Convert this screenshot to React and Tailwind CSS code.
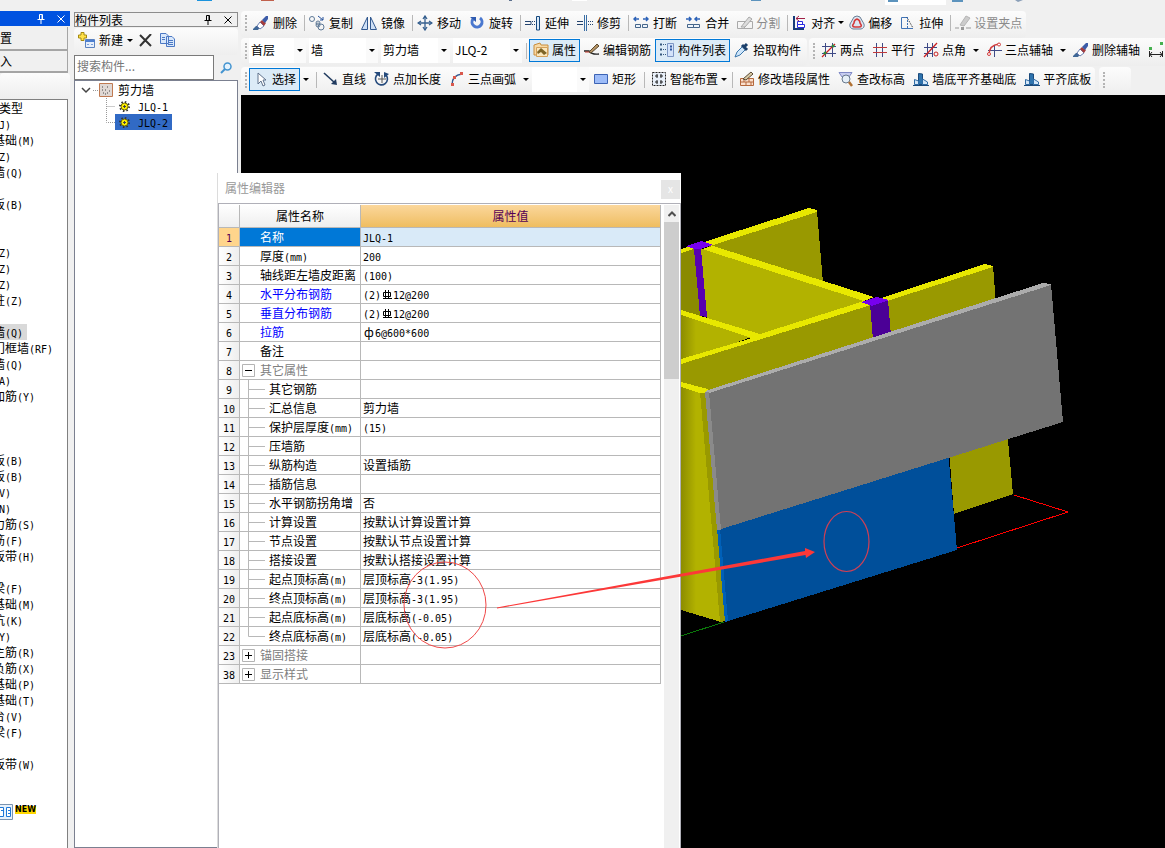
import React from 'react';

const UI_FONT = "font-['Noto_Sans_CJK_SC','Open_Sans',sans-serif]";

const TYPES = [
    '(J)', '基础(M)', '(Z)', '墙(Q)', '', '板(B)', '', '', '(Z)', '(Z)', '(Z)', '柱(Z)', '',
    '墙(Q)', '门框墙(RF)', '墙(Q)', '(A)', '加筋(Y)', '', '', '', '板(B)', '板(B)', '(V)', '(N)',
    '力筋(S)', '筋(F)', '板带(H)', '', '梁(F)', '基础(M)', '坑(K)', '(Y)', '主筋(R)', '负筋(X)',
    '基础(P)', '基础(T)', '台(V)', '梁(F)', '', '板带(W)',
];
const SELECTED_TYPE = 13;

const ROWS = [
    { id: 1, name: '名称', value: 'JLQ-1', selected: true },
    { id: 2, name: '厚度(mm)', value: '200' },
    { id: 3, name: '轴线距左墙皮距离', value: '(100)' },
    { id: 4, name: '水平分布钢筋', value: ['(2)', '12@200'], rebar: 'HRB400', link: true },
    { id: 5, name: '垂直分布钢筋', value: ['(2)', '12@200'], rebar: 'HRB400', link: true },
    { id: 6, name: '拉筋', value: ['', '6@600*600'], rebar: 'HPB300', link: true },
    { id: 7, name: '备注', value: '' },
    { id: 8, name: '其它属性', value: '', group: 'open' },
    { id: 9, name: '其它钢筋', value: '', child: true },
    { id: 10, name: '汇总信息', value: '剪力墙', child: true },
    { id: 11, name: '保护层厚度(mm)', value: '(15)', child: true },
    { id: 12, name: '压墙筋', value: '', child: true },
    { id: 13, name: '纵筋构造', value: '设置插筋', child: true },
    { id: 14, name: '插筋信息', value: '', child: true },
    { id: 15, name: '水平钢筋拐角增', value: '否', child: true },
    { id: 16, name: '计算设置', value: '按默认计算设置计算', child: true },
    { id: 17, name: '节点设置', value: '按默认节点设置计算', child: true },
    { id: 18, name: '搭接设置', value: '按默认搭接设置计算', child: true },
    { id: 19, name: '起点顶标高(m)', value: '层顶标高-3(1.95)', child: true },
    { id: 20, name: '终点顶标高(m)', value: '层顶标高-3(1.95)', child: true },
    { id: 21, name: '起点底标高(m)', value: '层底标高(-0.05)', child: true },
    { id: 22, name: '终点底标高(m)', value: '层底标高(-0.05)', child: true, last: true },
    { id: 23, name: '锚固搭接', value: '', group: 'closed' },
    { id: 38, name: '显示样式', value: '', group: 'closed' },
];

const ICONS = {
    brush: (
        <>
            <path d="M0 14 L3 11 H8 L5 15 H0Z" fill="#3f6796" />
            <path d="M4 11 L7 7 L11 11 L7 14Z" fill="#fff" stroke="#6d7fb0" />
            <path d="M7 7 L9 5 L13 8 L11 11Z" fill="#a53c3c" />
            <path d="M9 5 L13 1 H15 V4 L12 8Z" fill="#3c5ca8" />
        </>
    ),
    copy: (
        <g fill="none" stroke="#5d7896">
            <circle cx="3" cy="4" r="2.5" />
            <circle cx="9" cy="8" r="2" />
            <circle cx="12" cy="12" r="3" />
            <circle cx="9" cy="10" r="2" />
            <path d="M9 1 L14 5 M14 2 V5 H11" stroke="#24509a" />
        </g>
    ),
    mirror: (
        <g fill="#cfe0f5" stroke="#31588f">
            <path d="M6.5 2 V14.5 H0.5Z" />
            <path d="M9.5 2 V14.5 H15.5Z" />
        </g>
    ),
    move: (
        <g fill="none" stroke="#355f8f" strokeWidth="1.3">
            <path d="M8 1 V15 M1 8 H15" />
            <path d="M6 4 L8 1 L10 4 M6 12 L8 15 L10 12 M4 6 L1 8 L4 10 M12 6 L15 8 L12 10" />
        </g>
    ),
    rotate: (
        <>
            <path d="M11 3 A5 5 0 1 1 4 4" fill="none" stroke="#4a78cf" strokeWidth="3" />
            <path d="M1 2 H7 V7Z" fill="#2f5bb0" />
        </>
    ),
    extend: (
        <>
            <path d="M0 6.5 H6 V9.5 H0" fill="none" stroke="#24446f" />
            <path d="M7 6.5 H11 M7 9.5 H11" stroke="#24446f" strokeDasharray="1 1" />
            <path d="M11.5 1.5 H14.5 V15 H11.5Z" fill="#dceaf8" stroke="#16497f" />
        </>
    ),
    trim: (
        <>
            <path d="M0 6.5 H6 M0 9.5 H6" stroke="#24446f" />
            <path d="M11 6.5 H16 M11 9.5 H16" stroke="#24446f" strokeDasharray="1 1" />
            <path d="M7.5 0 V16 M9.5 0 V16" stroke="#3a6ea5" />
        </>
    ),
    split2: (
        <>
            <path d="M1 4 H6 M10 4 H15 M3 2 L1 4 L3 6 M13 2 L15 4 L13 6" fill="none" stroke="#2c62b8" strokeWidth="1.5" />
            <path d="M2.5 9.5 H7.5 V12.5 H2.5Z M9.5 9.5 H14.5 V12.5 H9.5Z" fill="#eef4fb" stroke="#44658a" />
        </>
    ),
    merge: (
        <>
            <path d="M1 4 H6 M10 4 H15 M4 2 L6 4 L4 6 M12 2 L10 4 L12 6" fill="none" stroke="#2c62b8" strokeWidth="1.5" />
            <path d="M2.5 9.5 H8.5 V12.5 H2.5Z M8.5 9.5 H14.5 V12.5 H8.5Z" fill="#eef4fb" stroke="#44658a" />
        </>
    ),
    cut: (
        <g fill="none" stroke="#a9a9a9">
            <path d="M0.5 6.5 H15.500 V13.5 H0.5Z M7.5 7 V14" />
            <path d="M4 12 L12 2 L15 4 L8 12Z" fill="#ddd" />
        </g>
    ),
    align: (
        <>
            <path d="M2 1 V14 H12" fill="none" stroke="#163b7a" strokeWidth="2" />
            <path d="M5.5 9.5 H12.5 V12.5 H5.5Z M5.5 6.500 H10.500 V9.500 H5.500Z" fill="#fff" stroke="#2a2ae0" />
            <path d="M4 3.5 H13 M7 1 L4 3.5 L7 6" fill="none" stroke="#a01f45" />
        </>
    ),
    offset: (
        <g fill="none">
            <path d="M5 2 Q8 0 11 2 L15 9 Q16 13 12 14 H4 Q0 13 1 9Z" fill="#dde6f1" stroke="#6a7f96" />
            <path d="M8 4 Q11 5 11 8 Q14 12 10 12 H6 Q2 12 5 8 Q5 5 8 4Z" stroke="#d33a3a" strokeWidth="1.5" />
        </g>
    ),
    stretch: (
        <>
            <path d="M7 2.5 H1.5 V13.5 H13" fill="none" stroke="#4173b5" />
            <path d="M7 2.5 L13 13" stroke="#222" strokeDasharray="1 1" />
            <path d="M7.5 2 V13" stroke="#4173b5" strokeDasharray="2 1" />
        </>
    ),
    grip: (
        <>
            <path d="M0 13 H4 M11 13 H16" stroke="#999" />
            <path d="M5 10 L11 1 L15 3 L9 11Z" fill="#ccc" stroke="#b5b5b5" />
            <path d="M6 12 H9 V15 H6Z" fill="#999" />
        </>
    ),
    props: (
        <>
            <path d="M1 3 L7 1 L8 3 H15 V13 H1Z" fill="#f7d9a5" stroke="#c98d3c" />
            <path d="M3.5 5.5 H14.5 V14.5 H3.5Z" fill="#fbe7bd" stroke="#d4a05a" />
            <path d="M4 10 L8 6 L14 11 L11 13 L8 10 L5 12Z" fill="#7d6427" />
        </>
    ),
    editBar: (
        <>
            <path d="M0 9 H5 Q8 13 15 12" fill="none" stroke="#222" strokeWidth="1.3" />
            <path d="M5 10 L13 2 L15 4 L7 11Z" fill="#b59364" stroke="#5b4a31" />
            <path d="M1 10 H5" stroke="#c0392b" />
        </>
    ),
    list: (
        <>
            <path d="M1 2.500 H3 M1 7.500 H3 M1 12.500 H3" stroke="#36597f" strokeWidth="2" />
            <path d="M4 2.500 H7 M4 7.500 H7 M4 12.500 H7" stroke="#36597f" strokeDasharray="1 1" />
            <path d="M8.5 1.5 H14.5 V14.5 H8.5Z" fill="#d4e3fa" stroke="#7d96c4" />
            <path d="M11 4.5 H13 M11 7.5 H13" stroke="#2f59a0" strokeWidth="2" />
        </>
    ),
    picker: (
        <>
            <path d="M1 15 L3 10 L9 4 L12 7 L6 13Z" fill="#cfe6fa" stroke="#3975ab" />
            <path d="M8 3 L13 8 M10 5 L13 2" stroke="#1b3f6a" strokeWidth="3" />
        </>
    ),
    gridPts: (
        <>
            <path d="M4.5 1 V15 M11.5 1 V15 M1 4.5 H15 M1 11.5 H15" stroke="#3e4a86" />
            <path d="M1 15 L14 2" stroke="#c22" strokeWidth="1.3" />
            <circle cx="4" cy="11" r="1.5" fill="#2e8b3a" />
            <circle cx="12" cy="4" r="1.5" fill="#2e8b3a" />
        </>
    ),
    gridPar: (
        <>
            <path d="M4.5 1 V15 M10.5 1 V15" stroke="#3e4a86" />
            <path d="M1 5.5 H15 M1 10.5 H15" stroke="#c0393b" />
        </>
    ),
    gridAngle: (
        <>
            <path d="M4.5 1 V15 M9.5 1 V15 M1 5.5 H14 M1 11.5 H10" stroke="#3e4a86" />
            <path d="M1 15 L14 1" stroke="#c22" strokeWidth="1.3" />
            <circle cx="13" cy="12" r="2" fill="none" stroke="#c22" />
        </>
    ),
    gridArc: (
        <>
            <path d="M8.5 3 V15 M2 8.5 H16" stroke="#3e4a86" />
            <path d="M3 13 Q3 3 13 2" fill="none" stroke="#d23b3b" strokeWidth="1.5" />
            <circle cx="3" cy="12" r="1.5" fill="#fff" stroke="#d23b3b" />
            <circle cx="13" cy="2.500" r="1.5" fill="#fff" stroke="#d23b3b" />
        </>
    ),
    measure: (
        <>
            <path d="M1 5 H4 V8 H1Z M12 0 H15 V3 H12Z" fill="#45b04f" />
            <path d="M1.5 9 V15 M14.5 9 V15 M1 12.5 H15 M4 10 L2 12.5 L4 15 M12 10 L14 12.500 L12 15" fill="none" stroke="#222" />
        </>
    ),
    cursor: <path d="M5 2 V13 L8 10 L10 15 L12 14 L10 9 H13Z" fill="#fff" stroke="#60728c" />,
    line: (
        <>
            <path d="M1 2 L12 12" stroke="#223c60" strokeWidth="1.6" />
            <path d="M14 14 L8 13 L13 8Z" fill="#223c60" />
        </>
    ),
    pointLen: (
        <>
            <path d="M4 3 A6 6 0 1 0 12 4" fill="none" stroke="#254a7c" strokeWidth="1.6" />
            <path d="M8 4 V12 M4 8 H12" stroke="#555" />
            <path d="M0 1 H6 V6Z M10 1 L15 3 L10 7Z" fill="#254a7c" />
        </>
    ),
    arc: (
        <>
            <path d="M3 14 Q3 4 13 3" fill="none" stroke="#31588f" strokeWidth="1.4" />
            <path d="M2 12 H5 V15 H2Z M4 5 H7 V8 H4Z M11 1 H14 V4 H11Z" fill="#d9584c" />
        </>
    ),
    rect: <path d="M1.5 3.5 H14.5 V12.5 H1.5Z" fill="#9dbcf8" stroke="#3c63b4" />,
    smart: (
        <>
            <path d="M1.500 1.500 H14.500 V14.500 H1.500Z" fill="#e8eff8" stroke="#222" strokeDasharray="2 1" />
            <path d="M6 3 V7 M4 5 H7 M10 3 V7 M9 5 H12 M6 9 V13 M4 11 H7 M10 9 V13 M9 11 H12" stroke="#222" />
        </>
    ),
    wallEdit: (
        <>
            <path d="M1.5 7.5 H14.5 V14.5 H1.5Z M1 11 H15 M5 8 V11 M10 8 V11 M7 11 V15 M12 11 V15" fill="#fbe0cd" stroke="#b5683c" />
            <path d="M4 8 L12 1 L14 3 L7 9Z" fill="#d7c8a4" stroke="#5a4a35" />
        </>
    ),
    checkH: (
        <>
            <path d="M1 1.500 H14 L11 6 H4Z" fill="#c7cdf0" stroke="#7f89c6" />
            <circle cx="8" cy="8" r="4" fill="#e5eff8" stroke="#68798e" />
            <path d="M11 11 L14 15" stroke="#b07032" strokeWidth="2.500" />
        </>
    ),
    alignBottom: (
        <>
            <path d="M5.5 2.500 L9.5 3 V13.500 H5.500Z" fill="#2f74ae" stroke="#1a4a7b" />
            <path d="M1.5 8.5 L5.500 10 V13.500 H1.500Z M9.500 8 L14.500 11 V13.500 H9.500Z" fill="#d3e6f7" stroke="#2f6ba5" />
            <path d="M0 14.500 H16" stroke="#1a4a7b" />
        </>
    ),
};

const Icon = ({ name }) => (
    <svg viewBox="0 0 16 16" className="w-4 h-4 shrink-0" aria-hidden="true">
        {ICONS[name]}
    </svg>
);

const Caret = () => (
    <svg viewBox="0 0 6 3" className="w-1.5 h-[3px] shrink-0" aria-hidden="true">
        <path d="M0 0 H6 L3 3Z" fill="#000" />
    </svg>
);

const Handle = () => <span className="w-0.5 h-4 shrink-0 ml-1 mr-0.5 border-l-2 border-dotted border-[#b4b4b4]" />;

const Sep = ({ wide }) => <span className={`w-px h-4 shrink-0 bg-[#b8b8b8] ${wide ? 'ml-1 mr-0.5' : 'ml-[3px]'}`} />;

const Tool = ({ icon, label, active, disabled, loose, caret }) => (
    <button
        type="button"
        disabled={disabled}
        className={`flex items-center h-[23px] pl-[3px] pb-px shrink-0 border whitespace-nowrap
            ${caret ? 'pr-0' : 'pr-[3px]'}
            ${loose ? 'gap-1' : 'gap-[3px]'}
            ${active ? 'bg-[#dcebf7] border-[#0078d7]' : 'border-transparent'}
            ${disabled ? 'text-[#8b8b8b]' : 'text-black'}`}
    >
        <Icon name={icon} />
        {label}
        {caret && <Caret />}
    </button>
);

const CaretButton = () => (
    <button type="button" aria-label="更多" className="flex items-center justify-center w-3 h-[23px] shrink-0">
        <Caret />
    </button>
);

const Combo = ({ label, value, width }) => (
    <span className={`relative flex items-center shrink-0 h-[25px] bg-white ${width}`}>
        <select aria-label={label} className="w-full h-full pl-0.5 pb-0.5 appearance-none bg-transparent outline-none">
            <option>{value}</option>
        </select>
        <span className="absolute right-0 inset-y-0 w-3 flex items-center justify-center bg-[#fafafa] pointer-events-none">
            <Caret />
        </span>
    </span>
);

const Strip = ({ children, className = '' }) => (
    <div className={`flex items-center shrink-0 pb-[3px] rounded-sm bg-linear-to-b from-[#fcfcfc] to-[#eeeeee] ${className}`}>
        {children}
    </div>
);

// half-width characters take exactly half of a 12px full-width cell
const Mono = ({ text }) =>
    text.split(/([\x20-\x7e]+)/).map((part, i) =>
        i % 2 ? (
            <span key={i} className="font-['DejaVu_Sans_Mono',monospace] text-[10px] leading-none">
                {part}
            </span>
        ) : (
            part
        )
    );

const Rebar = ({ grade }) =>
    grade === 'HPB300' ? (
        <span className="inline-block w-3 text-center leading-none">ф</span>
    ) : (
        <svg viewBox="0 0 12 12" className="inline-block w-3 h-3 align-[-2px]" role="img" aria-label={grade}>
            <path d="M2.5 3.5 H9.500 V7.500 H2.500Z M4.500 1 V10 M7.500 1 V10 M2 9.500 H11" fill="none" stroke="#000" />
        </svg>
    );

const Pin = ({ color }) => (
    <svg viewBox="0 0 8 10" className="w-2 h-2.5" aria-hidden="true">
        <path d="M2.5 0.500 H5.500 V5.500 H2.500Z M0.500 5.500 H7.500 M4 6 V10 M5 1 V5" fill="none" stroke={color} />
    </svg>
);

const Cross = ({ color }) => (
    <svg viewBox="0 0 8 8" className="w-2 h-2" aria-hidden="true">
        <path d="M0.500 0.500 L7.500 7.500 M7.500 0.500 L0.500 7.500" stroke={color} />
    </svg>
);

const TopEdge = () => (
    <svg viewBox="0 0 1165 11" className="w-[1165px] h-[11px]" aria-hidden="true">
        <path d="M197 0 H212 V1 H197Z" fill="#1b93dd" />
        <path d="M261 0 H274 V1 H261Z" fill="#c0604c" />
        <path d="M509 0 H512 V1 H509Z" fill="#5b6f8d" />
        <path d="M572 0 H587 V1 H572Z M885 0 H946 V5 H885Z" fill="#fff" />
        <path d="M751 0 H761 V1 H751Z M888 0 H898 V2 H888Z M952 0 H963 V2 H952Z" fill="#5c93bd" />
        <path d="M1015 0 H1023 L1018 2Z" fill="#8a9fb8" />
    </svg>
);

const ModulePanel = () => (
    <aside className="w-[70px] shrink-0 flex flex-col overflow-hidden">
        <div className="h-[15px] shrink-0 bg-[#0052e0] flex items-center justify-end gap-3 pr-[5px]">
            <button type="button" aria-label="固定"><Pin color="#fff" /></button>
            <button type="button" aria-label="关闭"><Cross color="#fff" /></button>
        </div>
        <button type="button" className="h-6 mt-px mr-0.5 shrink-0 text-left border-b-2 border-r border-[#a5a5a5] leading-5">置</button>
        <button type="button" className="h-[22px] mr-0.5 shrink-0 text-left border-b-2 border-r border-[#a5a5a5] leading-5">入</button>
        <Strip className="h-[26px]" />
        <div className="flex-1 mr-0.5 bg-white border-t border-r border-[#808080] overflow-hidden">
            <ul className="-ml-[7px] leading-4 whitespace-nowrap">
                <li className="h-4 pl-1.5">类型</li>
                {TYPES.map((t, i) => (
                    <li key={i} className="h-4 flex">
                        <span className={i === SELECTED_TYPE ? 'bg-[#d9d9d9] pr-1' : ''}>
                            <Mono text={t} />
                        </span>
                    </li>
                ))}
            </ul>
            <div className="flex items-start mt-8">
                <svg viewBox="0 0 13 16" className="w-[13px] h-4" aria-hidden="true">
                    <path d="M0 0.500 H12.500 V15.500 H0" fill="#e8f2fc" stroke="#7a93b0" />
                    <path d="M0 3.500 H3.500 V12.500 H0 M6.500 3.500 H10.500 V12.500 H6.500Z" fill="#fff" stroke="#1f78d8" />
                    <path d="M1 6.500 H3 M8 6.500 H10 M8 9.500 H10" stroke="#1f78d8" />
                </svg>
                <span className="bg-[#ffd800] text-[8px] leading-[8px] font-bold font-['DejaVu_Sans',sans-serif] ml-0.5 mt-0.5">NEW</span>
            </div>
        </div>
    </aside>
);

const Gear = () => (
    <svg viewBox="0 0 11 11" className="w-[11px] h-[11px]" aria-hidden="true">
        <circle cx="5.5" cy="5.5" r="4.500" fill="none" stroke="#333" strokeWidth="2" strokeDasharray="1.500 2" />
        <circle cx="5.5" cy="5.5" r="3.500" fill="#ffee00" stroke="#6b6400" />
        <path d="M5.500 4 V7 M4 5.500 H7" stroke="#444" />
    </svg>
);

const ComponentPanel = () => (
    <aside className="w-[164px] ml-1 shrink-0 flex flex-col">
        <div className="h-[15px] shrink-0 mt-px border border-[#8c8c8c] flex items-center pr-[5px]">
            <h2 className="flex-1 leading-3">构件列表</h2>
            <button type="button" aria-label="固定" className="mr-3"><Pin color="#000" /></button>
            <button type="button" aria-label="关闭"><Cross color="#000" /></button>
        </div>
        <Strip className="h-[27px] mt-px pl-1">
            <button type="button" className="flex items-center gap-1">
                <svg viewBox="0 0 17 17" className="w-[17px] h-[17px]" aria-hidden="true">
                    <path d="M7.500 7.500 H16.500 V15.500 H7.500Z" fill="#e6effb" stroke="#5b82c0" />
                    <path d="M7 8 H17 V10 H7Z" fill="#4d7fd0" />
                    <path d="M9 12.500 H11 M13 12.500 H15" stroke="#7ea0d8" />
                    <path d="M3 0.500 H6 V3 H8.500 V6 H6 V8.500 H3 V6 H0.500 V3 H3Z" fill="#ffe14a" stroke="#a58a10" />
                </svg>
                新建
                <Caret />
            </button>
            <button type="button" aria-label="删除" className="ml-1.5">
                <svg viewBox="0 0 13 13" className="w-[13px] h-[13px]" aria-hidden="true">
                    <path d="M1 1 L12 12 M12 0 L1 12" stroke="#333" strokeWidth="2" />
                </svg>
            </button>
            <button type="button" aria-label="复制" className="ml-2">
                <svg viewBox="0 0 15 14" className="w-[15px] h-3.5" aria-hidden="true">
                    <path d="M0.500 0.500 H6 L8.500 3 V10.500 H0.500Z M6.500 3.500 H12 L14.500 6 V13.500 H6.500Z" fill="#d9e8fb" stroke="#4c79c4" />
                    <path d="M2 4.500 H5 M2 6.500 H5 M8 7.500 H13 M8 9.500 H13 M8 11.500 H13" stroke="#4c79c4" />
                </svg>
            </button>
        </Strip>
        <div className="flex h-[25px] shrink-0">
            <input
                aria-label="搜索构件"
                placeholder="搜索构件..."
                className="flex-1 min-w-0 px-0.5 pb-1 bg-white border border-[#7a7a7a] placeholder:text-[#777] outline-none"
            />
            <button type="button" aria-label="搜索" className="w-6 flex items-center justify-center">
                <svg viewBox="0 0 12 12" className="w-3 h-3" aria-hidden="true">
                    <circle cx="7.500" cy="4.500" r="3.500" fill="#e4f2fd" stroke="#4394d0" strokeWidth="1.500" />
                    <path d="M5 7 L1 11" stroke="#4394d0" strokeWidth="2" />
                </svg>
            </button>
        </div>
        <div className="flex-1 bg-white border border-[#7b8090] pl-1.5">
            <div className="flex items-center h-[17px]">
                <svg viewBox="0 0 18 16" className="w-[18px] h-4" aria-hidden="true">
                    <path d="M1 6 L5 10 L9 6" fill="none" stroke="#444" strokeWidth="1.500" />
                    <path d="M12 8.500 H18" stroke="#999" strokeDasharray="1 1" />
                </svg>
                <svg viewBox="0 0 14 14" className="w-3.5 h-3.5" aria-hidden="true">
                    <path d="M0.500 0.500 H13.500 V13.500 H0.500Z" fill="#e0d8d4" stroke="#c07a52" />
                    <path d="M3 4 H4 M6 7 H7 M4 10 H5 M8 4 H9 M8 10 H9 M3 7 H4 M6 11 H7 M10 8 H11" stroke="#444" />
                </svg>
                <span className="ml-[5px]">剪力墙</span>
            </div>
            {['JLQ-1', 'JLQ-2'].map((name, i) => (
                <div key={name} className="flex items-center h-4 pl-6">
                    <svg viewBox="0 0 10 16" className="w-2.5 h-4" aria-hidden="true">
                        <path d={i ? 'M1.500 0 V8.500 H10' : 'M1.500 0 V16 M1.500 8.500 H10'} fill="none" stroke="#999" strokeDasharray="1 1" />
                    </svg>
                    <span className={`flex items-center h-4 pl-1 pr-1 ${i ? 'bg-[#316ac5]' : ''}`}>
                        <Gear />
                        <span className="ml-2"><Mono text={name} /></span>
                    </span>
                </div>
            ))}
        </div>
    </aside>
);

const Toolbars = () => (
    <div className="shrink-0">
        <div className="flex h-[27px]">
            <Strip>
                <Handle />
                <Tool loose icon="brush" label="删除" />
                <Sep />
                <Tool loose icon="copy" label="复制" />
                <Tool loose icon="mirror" label="镜像" />
                <Sep />
                <Tool loose icon="move" label="移动" />
                <Tool loose icon="rotate" label="旋转" />
                <Sep />
                <Tool loose icon="extend" label="延伸" />
                <Tool loose icon="trim" label="修剪" />
                <Sep />
                <Tool loose icon="split2" label="打断" />
                <Tool loose icon="merge" label="合并" />
                <Tool icon="cut" label="分割" disabled />
                <Sep />
                <Tool icon="align" label="对齐" caret />
                <Tool icon="offset" label="偏移" />
                <Tool icon="stretch" label="拉伸" />
                <Sep />
                <Tool icon="grip" label="设置夹点" disabled />
            </Strip>
        </div>
        <div className="flex h-7 gap-0.5">
            <Strip className="w-[566px]">
                <Handle />
                <span className="flex gap-[3px]">
                    <Combo label="楼层" value="首层" width="w-[57px]" />
                    <Combo label="构件大类" value="墙" width="w-[69px]" />
                    <Combo label="构件类型" value="剪力墙" width="w-[69px]" />
                    <Combo label="构件" value="JLQ-2" width="w-[69px]" />
                </span>
                <Sep wide />
                <Tool icon="props" label="属性" active />
                <Tool icon="editBar" label="编辑钢筋" />
                <Tool icon="list" label="构件列表" active />
                <Tool icon="picker" label="拾取构件" />
            </Strip>
            <Strip className="flex-1">
                <Handle />
                <Tool icon="gridPts" label="两点" />
                <Tool icon="gridPar" label="平行" />
                <Tool icon="gridAngle" label="点角" />
                <CaretButton />
                <Tool icon="gridArc" label="三点辅轴" />
                <CaretButton />
                <Tool icon="brush" label="删除辅轴" />
                <Tool icon="measure" label="" />
            </Strip>
        </div>
        <div className="flex h-[29px] pt-px gap-1">
            <Strip>
                <Handle />
                <Tool icon="cursor" label="选择" active />
                <CaretButton />
                <Sep wide />
                <Tool icon="line" label="直线" />
                <Tool icon="pointLen" label="点加长度" />
                <Tool icon="arc" label="三点画弧" />
                <CaretButton />
                <Combo label="半径" value="" width="w-[57px]" />
                <Tool icon="rect" label="矩形" />
                <Sep wide />
                <Tool icon="smart" label="智能布置" caret />
                <Sep wide />
                <Tool icon="wallEdit" label="修改墙段属性" />
                <Tool icon="checkH" label="查改标高" />
                <Tool icon="alignBottom" label="墙底平齐基础底" />
                <Tool icon="alignBottom" label="平齐底板" />
            </Strip>
            <Strip className="w-8">
                <Handle />
            </Strip>
        </div>
    </div>
);

const Scene = () => (
    <svg viewBox="241 95 924 753" className="block w-[924px] h-[753px]" shapeRendering="crispEdges" role="img" aria-label="三维视图">
        <defs>
            <linearGradient id="shade" x1="681" x2="696" y1="0" y2="0" gradientUnits="userSpaceOnUse">
                <stop offset="0" stopColor="#8c8c00" />
                <stop offset="1" stopColor="#b2b200" />
            </linearGradient>
        </defs>
        <path d="M681 252 L694 249 L702 318 L681 312Z" fill="#8a8a00" />
        <path d="M706 244 L817 211 L823 283 L712 250Z" fill="#999900" />
        <path d="M701 249 L712 248 L868 302 L762 335 L707 318Z" fill="#b2b200" />
        <path d="M681 312 L757 335 L681 363Z" fill="url(#shade)" />
        <path d="M681 360 L872 301 L900 298 L940 320 L707 394 L681 384Z" fill="#999900" />
        <path d="M886 299 L993 266 L996 304 L886 337Z" fill="#999900" />
        <path d="M681 249 L692 246 L694 249 L681 253Z" fill="#e8e800" />
        <path d="M704 242 L809 208 L817 210 V212 L710 246Z" fill="#e8e800" />
        <path d="M702 249 L713 246 L874 297 L864 301Z" fill="#e8e800" />
        <path d="M681 310 L760 334 L864 301 L871 305 L681 364 V359 L752 338 L681 315Z" fill="#e8e800" />
        <path d="M881 298 L985 264 L993 266 V267 L887 301Z" fill="#e8e800" />
        <path d="M686 246 L701 241 L713 245 L697 250Z" fill="#7700ee" />
        <path d="M694 249 L701 249 L707 317 L700 316Z" fill="#5800b0" />
        <path d="M870 304 L888 300 L891 336 L873 340Z" fill="#4b0096" />
        <path d="M861 302 L877 297 L889 300 L872 306Z" fill="#7700ee" />
        <path d="M681 386 L701 392 L721 622 L681 610Z" fill="url(#shade)" />
        <path d="M700 392 L706 392 L725 621 L720 622Z" fill="#999900" />
        <path d="M681 382 L708 389 L705 393 L700 393 L681 387Z" fill="#e8e800" />
        <path d="M949 450 L1007 430 L1013 494 L954 514Z" fill="#999900" />
        <path d="M717 526 L948 450 L957 550 L725 622Z" fill="#004f9a" />
        <path d="M717 528 L720 528 L728 621 L725 622Z" fill="#0060b8" />
        <path d="M706 391 L1051 284 L1063 422 L718 530Z" fill="#737373" />
        <path d="M705 391 L1043 283 L1051 284 V285 L709 393Z" fill="#acacac" />
        <path d="M705 392 L709 392 L721 530 L717 530Z" fill="#8a8a8a" />
        <path d="M1014 495 L1068 512 L957 548" fill="none" stroke="#f00" />
        <path d="M681 636 L724 622" stroke="#0a7a0a" />
    </svg>
);

const NameCell = ({ row }) => {
    const color = row.selected ? 'text-white' : row.link ? 'text-[#0000ff]' : row.group ? 'text-[#808080]' : 'text-black';
    return (
        <div className={`flex items-center h-[18px] leading-[18px] whitespace-nowrap ${color}`}>
            {row.group && (
                <button type="button" aria-label={row.name} className="ml-0.5 mr-[5px]">
                    <svg viewBox="0 0 13 13" className="block w-[13px] h-[13px]" aria-hidden="true">
                        <path d="M0.500 0.500 H12.500 V12.500 H0.500Z" fill="#fff" stroke="#b4b4b4" />
                        <path d={row.group === 'open' ? 'M3 6.500 H10' : 'M3 6.500 H10 M6.500 3 V10'} stroke="#000" />
                    </svg>
                </button>
            )}
            {row.child && (
                <svg viewBox="0 0 29 18" className="w-[29px] h-[18px] shrink-0" aria-hidden="true">
                    <path d={row.last ? 'M8.500 0 V9.500 H25' : 'M8.500 0 V18 M8.500 9.500 H25'} fill="none" stroke="#b8b8b8" />
                </svg>
            )}
            <span className={row.group || row.child ? '' : 'pl-5'}>
                <Mono text={row.name} />
            </span>
        </div>
    );
};

const PropertyEditor = () => (
    <section className="absolute left-[217px] top-[173px] bottom-0 w-[464px] flex flex-col bg-white border-l border-[#dcdcdc]">
        <header className="h-[30px] shrink-0 flex items-center pl-[7px] pr-px">
            <h2 className="flex-1 text-[#999]">属性编辑器</h2>
            <button type="button" aria-label="关闭" className="w-[19px] h-[19px] mt-0.5 bg-[#e5e5e5] text-white text-[10px] leading-4">x</button>
        </header>
        <div className="flex-1 min-h-0 flex items-stretch justify-between border border-b-0 border-[#b0b0b8] pt-px pr-px">
            <table className="table-fixed w-[442px] self-start border-separate border-spacing-0">
                <colgroup>
                    <col className="w-[21px]" />
                    <col className="w-[121px]" />
                    <col className="w-[300px]" />
                </colgroup>
                <thead>
                    <tr className="h-[23px]">
                        <th className="p-0 bg-linear-to-b from-white to-[#eeeeee] border-r border-b border-[#b8b8b8]" />
                        <th className="p-0 font-normal leading-[22px] bg-linear-to-b from-white to-[#eeeeee] border-r border-b border-[#b8b8b8]">属性名称</th>
                        <th className="p-0 font-normal leading-[22px] text-[#550055] bg-linear-to-b from-[#fbd79b] to-[#efbd5f] border-r border-b border-[#b8b8b8]">属性值</th>
                    </tr>
                </thead>
                <tbody>
                    {ROWS.map((row) => (
                        <tr key={row.id} className="h-[19px]">
                            <th
                                className={`p-0 font-normal leading-[18px] text-center border-r border-b border-[#b8b8b8]
                                    ${row.selected ? 'bg-[#ffd58c] text-[#550055]' : 'bg-linear-to-r from-white to-[#eeeeee]'}`}
                            >
                                <Mono text={String(row.id)} />
                            </th>
                            <td className={`p-0 overflow-hidden border-r border-b border-[#b8b8b8] ${row.selected ? 'bg-[#0078d7]' : ''}`}>
                                <NameCell row={row} />
                            </td>
                            <td className={`p-0 pl-0.5 leading-[18px] whitespace-nowrap border-r border-b border-[#b8b8b8] ${row.selected ? 'bg-[#d9eaf8]' : ''}`}>
                                {row.rebar ? (
                                    <>
                                        <Mono text={row.value[0]} />
                                        <Rebar grade={row.rebar} />
                                        <Mono text={row.value[1]} />
                                    </>
                                ) : (
                                    <Mono text={row.value} />
                                )}
                            </td>
                        </tr>
                    ))}
                </tbody>
            </table>
            <div className="w-[15px] bg-[#f0f0f0]">
                <div className="h-[17px] flex items-center justify-center">
                    <svg viewBox="0 0 8 6" className="w-2 h-1.5" aria-hidden="true">
                        <path d="M0.500 5 L4 1.500 L7.500 5" fill="none" stroke="#505050" strokeWidth="2" />
                    </svg>
                </div>
                <div className="h-[157px] bg-[#cdcdcd]" />
            </div>
        </div>
    </section>
);

const Markup = () => (
    <svg viewBox="0 0 1165 848" className="absolute left-0 top-0 w-[1165px] h-[848px] pointer-events-none" aria-hidden="true">
        <ellipse cx="445" cy="605" rx="41" ry="43" fill="none" stroke="#f04848" />
        <ellipse cx="846.500" cy="541.500" rx="22.500" ry="30" fill="none" stroke="#d04055" strokeWidth="1.200" />
        <path d="M497 607.500 L805 551 L805 548 L815 552 L806 558 L805.500 555 L497 608.500Z" fill="#fc3838" />
    </svg>
);

export default function App() {
    return (
        <main className={`relative h-screen w-full flex flex-col overflow-hidden bg-[#f0f0f0] text-[12px] leading-4 text-black ${UI_FONT}`}>
            <div className="h-[11px] shrink-0 overflow-hidden">
                <TopEdge />
            </div>
            <div className="flex-1 min-h-0 flex">
                <ModulePanel />
                <ComponentPanel />
                <div className="flex-1 min-w-0 ml-[3px] flex flex-col overflow-hidden">
                    <Toolbars />
                    <div className="flex-1 min-h-0 bg-black overflow-hidden">
                        <Scene />
                    </div>
                </div>
            </div>
            <PropertyEditor />
            <Markup />
        </main>
    );
}
